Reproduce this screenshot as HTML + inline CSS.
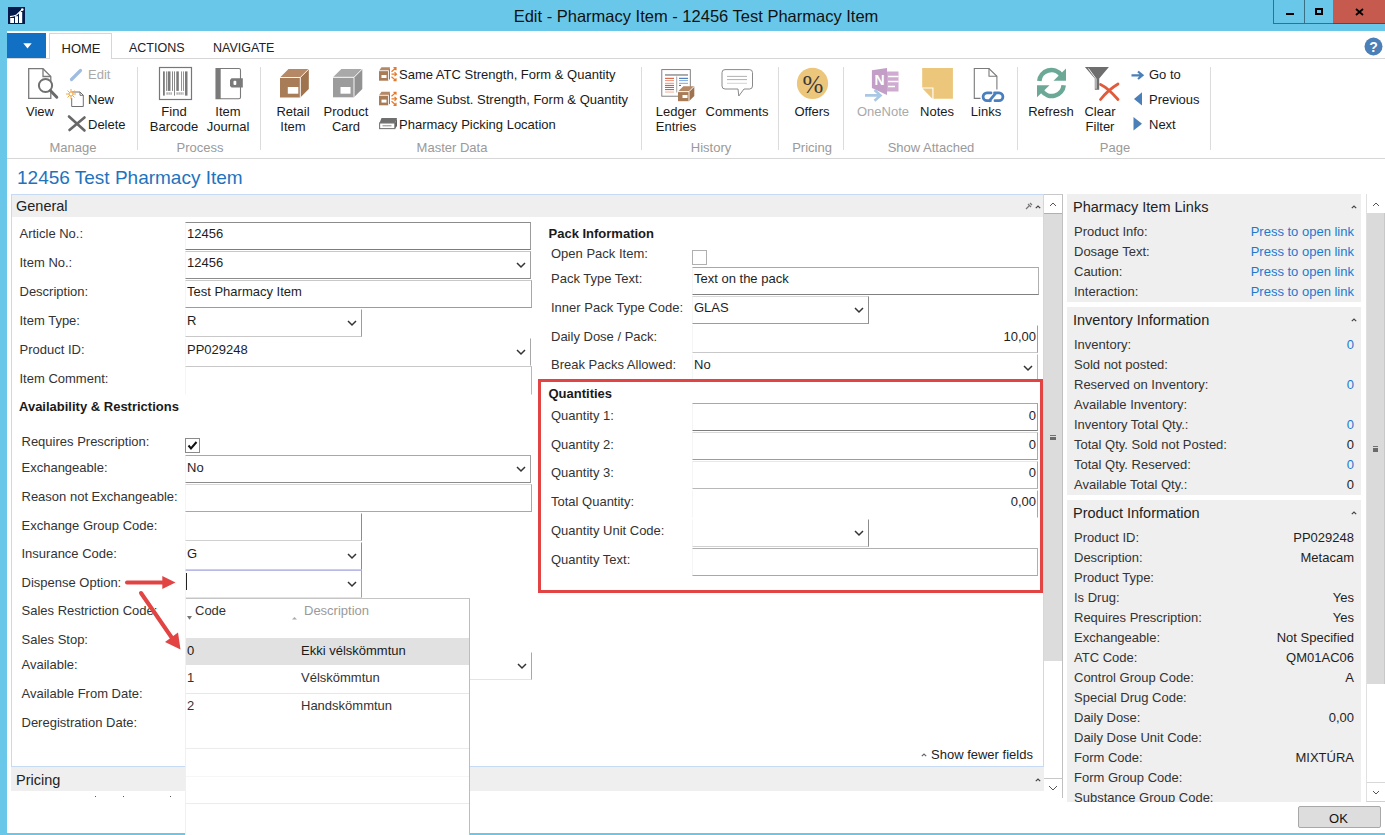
<!DOCTYPE html><html><head><meta charset="utf-8"><style>
html,body{margin:0;padding:0;}
body{width:1385px;height:835px;overflow:hidden;position:relative;background:#fff;font-family:"Liberation Sans",sans-serif;}
.a{position:absolute;}
.t{position:absolute;white-space:nowrap;}
</style></head><body>
<div class="a" style="left:0px;top:0px;width:1385px;height:31px;background:#69c8ea;"></div>
<div class="a" style="left:0px;top:0px;width:7px;height:835px;background:#69c8ea;"></div>
<div class="a" style="left:0px;top:833px;width:1385px;height:2px;background:#69c8ea;"></div>
<svg class="a" style="left:8px;top:7px;" width="17" height="17" viewBox="0 0 17 17"><rect width="17" height="17" fill="#021a4c"/><rect x="2.2" y="11" width="3.8" height="5" fill="#fff"/><rect x="7" y="9.2" width="3" height="6.8" fill="#fff"/><rect x="11" y="5" width="3.2" height="11" fill="#fff"/><path d="M2 9.6 Q6 9 8.5 8 L14.3 2.5" stroke="#fff" stroke-width="1.1" fill="none"/><circle cx="14.3" cy="2.6" r="1.3" fill="#fff"/></svg>
<div class="t" style="left:496px;width:400px;top:7.73px;font-size:16.5px;line-height:16.5px;color:#111;font-weight:normal;text-align:center;">Edit - Pharmacy Item - 12456 Test Pharmacy Item</div>
<div class="a" style="left:1273px;top:0px;width:31px;height:24px;background:#69c8ea;border:1px solid #3a6f86;border-top:none;border-right:none;box-sizing:border-box;"></div>
<div class="a" style="left:1304px;top:0px;width:30px;height:24px;background:#69c8ea;border:1px solid #3a6f86;border-top:none;box-sizing:border-box;"></div>
<div class="a" style="left:1333px;top:0px;width:52px;height:24px;background:#c75a4e;border-bottom:1px solid #7a3a33;box-sizing:border-box;"></div>
<div class="a" style="left:1286px;top:13px;width:8px;height:2px;background:#000;"></div>
<div class="a" style="left:1315px;top:8px;width:8px;height:7px;border:2px solid #000;box-sizing:border-box;"></div>
<svg class="a" style="left:1355px;top:8px;" width="9" height="8" viewBox="0 0 9 8"><path d="M1 1 L8 7 M8 1 L1 7" stroke="#000" stroke-width="1.8"/></svg>
<div class="a" style="left:7px;top:58px;width:1378px;height:1px;background:#d6d6d6;"></div>
<div class="a" style="left:7px;top:158px;width:1378px;height:1px;background:#d6d6d6;"></div>
<div class="a" style="left:7px;top:33px;width:39px;height:25px;background:#1170c4;"></div>
<svg class="a" style="left:22.5px;top:42.5px;" width="9" height="6" viewBox="0 0 9 6"><path d="M0.3 0.3 L8.7 0.3 L4.5 5.5 Z" fill="#fff"/></svg>
<div class="a" style="left:49px;top:33px;width:63px;height:26px;background:#fff;border:1px solid #d6d6d6;border-bottom:none;box-sizing:border-box;"></div>
<div class="t" style="left:61.5px;top:42.00px;font-size:13px;line-height:13px;color:#222;font-weight:normal;">HOME</div>
<div class="t" style="left:129px;top:42.42px;font-size:12.5px;line-height:12.5px;color:#222;font-weight:normal;">ACTIONS</div>
<div class="t" style="left:213px;top:42.42px;font-size:12.5px;line-height:12.5px;color:#222;font-weight:normal;">NAVIGATE</div>
<svg class="a" style="left:1364px;top:37px;" width="19" height="19" viewBox="0 0 19 19"><circle cx="9.5" cy="9.5" r="9" fill="#4a7fb8"/><text x="9.5" y="15" font-family="Liberation Sans" font-weight="bold" font-size="14" fill="#fff" text-anchor="middle">?</text></svg>
<div class="a" style="left:137px;top:67px;width:1px;height:83px;background:#dcdcdc;"></div>
<div class="a" style="left:260px;top:67px;width:1px;height:83px;background:#dcdcdc;"></div>
<div class="a" style="left:641px;top:67px;width:1px;height:83px;background:#dcdcdc;"></div>
<div class="a" style="left:778px;top:67px;width:1px;height:83px;background:#dcdcdc;"></div>
<div class="a" style="left:843px;top:67px;width:1px;height:83px;background:#dcdcdc;"></div>
<div class="a" style="left:1017px;top:67px;width:1px;height:83px;background:#dcdcdc;"></div>
<div class="a" style="left:1210px;top:67px;width:1px;height:83px;background:#dcdcdc;"></div>
<div class="t" style="left:-127px;width:400px;top:140.50px;font-size:13px;line-height:13px;color:#9a9a9a;font-weight:normal;text-align:center;">Manage</div>
<div class="t" style="left:0px;width:400px;top:140.50px;font-size:13px;line-height:13px;color:#9a9a9a;font-weight:normal;text-align:center;">Process</div>
<div class="t" style="left:252px;width:400px;top:140.50px;font-size:13px;line-height:13px;color:#9a9a9a;font-weight:normal;text-align:center;">Master Data</div>
<div class="t" style="left:511px;width:400px;top:140.50px;font-size:13px;line-height:13px;color:#9a9a9a;font-weight:normal;text-align:center;">History</div>
<div class="t" style="left:612px;width:400px;top:140.50px;font-size:13px;line-height:13px;color:#9a9a9a;font-weight:normal;text-align:center;">Pricing</div>
<div class="t" style="left:731px;width:400px;top:140.50px;font-size:13px;line-height:13px;color:#9a9a9a;font-weight:normal;text-align:center;">Show Attached</div>
<div class="t" style="left:915px;width:400px;top:140.50px;font-size:13px;line-height:13px;color:#9a9a9a;font-weight:normal;text-align:center;">Page</div>
<div class="t" style="left:-160px;width:400px;top:105.00px;font-size:13px;line-height:13px;color:#1a1a1a;font-weight:normal;text-align:center;">View</div>
<div class="t" style="left:-26px;width:400px;top:105.00px;font-size:13px;line-height:13px;color:#1a1a1a;font-weight:normal;text-align:center;">Find</div>
<div class="t" style="left:-26px;width:400px;top:119.50px;font-size:13px;line-height:13px;color:#1a1a1a;font-weight:normal;text-align:center;">Barcode</div>
<div class="t" style="left:28px;width:400px;top:105.00px;font-size:13px;line-height:13px;color:#1a1a1a;font-weight:normal;text-align:center;">Item</div>
<div class="t" style="left:28px;width:400px;top:119.50px;font-size:13px;line-height:13px;color:#1a1a1a;font-weight:normal;text-align:center;">Journal</div>
<div class="t" style="left:93px;width:400px;top:105.00px;font-size:13px;line-height:13px;color:#1a1a1a;font-weight:normal;text-align:center;">Retail</div>
<div class="t" style="left:93px;width:400px;top:119.50px;font-size:13px;line-height:13px;color:#1a1a1a;font-weight:normal;text-align:center;">Item</div>
<div class="t" style="left:146px;width:400px;top:105.00px;font-size:13px;line-height:13px;color:#1a1a1a;font-weight:normal;text-align:center;">Product</div>
<div class="t" style="left:146px;width:400px;top:119.50px;font-size:13px;line-height:13px;color:#1a1a1a;font-weight:normal;text-align:center;">Card</div>
<div class="t" style="left:476px;width:400px;top:105.00px;font-size:13px;line-height:13px;color:#1a1a1a;font-weight:normal;text-align:center;">Ledger</div>
<div class="t" style="left:476px;width:400px;top:119.50px;font-size:13px;line-height:13px;color:#1a1a1a;font-weight:normal;text-align:center;">Entries</div>
<div class="t" style="left:537px;width:400px;top:105.00px;font-size:13px;line-height:13px;color:#1a1a1a;font-weight:normal;text-align:center;">Comments</div>
<div class="t" style="left:612px;width:400px;top:105.00px;font-size:13px;line-height:13px;color:#1a1a1a;font-weight:normal;text-align:center;">Offers</div>
<div class="t" style="left:683px;width:400px;top:105.00px;font-size:13px;line-height:13px;color:#a9a9a9;font-weight:normal;text-align:center;">OneNote</div>
<div class="t" style="left:737px;width:400px;top:105.00px;font-size:13px;line-height:13px;color:#1a1a1a;font-weight:normal;text-align:center;">Notes</div>
<div class="t" style="left:786px;width:400px;top:105.00px;font-size:13px;line-height:13px;color:#1a1a1a;font-weight:normal;text-align:center;">Links</div>
<div class="t" style="left:851px;width:400px;top:105.00px;font-size:13px;line-height:13px;color:#1a1a1a;font-weight:normal;text-align:center;">Refresh</div>
<div class="t" style="left:900px;width:400px;top:105.00px;font-size:13px;line-height:13px;color:#1a1a1a;font-weight:normal;text-align:center;">Clear</div>
<div class="t" style="left:900px;width:400px;top:119.50px;font-size:13px;line-height:13px;color:#1a1a1a;font-weight:normal;text-align:center;">Filter</div>
<div class="t" style="left:88px;top:68.00px;font-size:13px;line-height:13px;color:#a9a9a9;font-weight:normal;">Edit</div>
<div class="t" style="left:88px;top:93.00px;font-size:13px;line-height:13px;color:#1a1a1a;font-weight:normal;">New</div>
<div class="t" style="left:88px;top:117.50px;font-size:13px;line-height:13px;color:#1a1a1a;font-weight:normal;">Delete</div>
<div class="t" style="left:399px;top:68.00px;font-size:13px;line-height:13px;color:#1a1a1a;font-weight:normal;">Same ATC Strength, Form &amp; Quantity</div>
<div class="t" style="left:399px;top:93.00px;font-size:13px;line-height:13px;color:#1a1a1a;font-weight:normal;">Same Subst. Strength, Form &amp; Quantity</div>
<div class="t" style="left:399px;top:117.50px;font-size:13px;line-height:13px;color:#1a1a1a;font-weight:normal;">Pharmacy Picking Location</div>
<div class="t" style="left:1149px;top:68.00px;font-size:13px;line-height:13px;color:#1a1a1a;font-weight:normal;">Go to</div>
<div class="t" style="left:1149px;top:93.00px;font-size:13px;line-height:13px;color:#1a1a1a;font-weight:normal;">Previous</div>
<div class="t" style="left:1149px;top:117.50px;font-size:13px;line-height:13px;color:#1a1a1a;font-weight:normal;">Next</div>
<svg class="a" style="left:0;top:0" width="1385" height="160" viewBox="0 0 1385 160"><path d="M28.7 68.7 H43 L50.8 76.5 V98.3 H28.7 Z" fill="#fff" stroke="#7a7a7a" stroke-width="1.3"/><path d="M43 68.7 V76.5 H50.8" fill="none" stroke="#7a7a7a" stroke-width="1.3"/><circle cx="45.5" cy="85.5" r="6.6" fill="#fff" stroke="#707070" stroke-width="2"/><path d="M50.3 90.5 L56.8 97.2" stroke="#6a6a6a" stroke-width="3" stroke-linecap="round"/><path d="M71.5 79.5 L80.5 70.5" stroke="#9fbde2" stroke-width="3.2" stroke-linecap="round"/><path d="M71.7 92 H80 L83.3 95.3 V106.5 H71.7 V98" fill="#fff" stroke="#707070" stroke-width="1"/><path d="M80 92 V95.3 H83.3" fill="none" stroke="#707070" stroke-width="1"/><path d="M71 89 V99 M66 94 H76 M67.5 90.5 L74.5 97.5 M74.5 90.5 L67.5 97.5" stroke="#eda94a" stroke-width="1"/><circle cx="71" cy="94" r="2" fill="#fff" stroke="#eda94a" stroke-width="1"/><path d="M69 116.5 L84.5 130.5 M84.5 117.5 L69.5 130" stroke="#686868" stroke-width="2.6" stroke-linecap="round"/><rect x="159.5" y="67.5" width="32" height="32" fill="#fff" stroke="#777" stroke-width="1.2"/><rect x="163" y="71.4" width="1.8" height="24.2" fill="#7a7a7a"/><rect x="166.2" y="71.4" width="1.1" height="19.5" fill="#7a7a7a"/><rect x="168" y="71.4" width="2.5" height="19.5" fill="#7a7a7a"/><rect x="172" y="71.4" width="0.9" height="19.5" fill="#7a7a7a"/><rect x="174.1" y="71.4" width="0.9" height="24.2" fill="#7a7a7a"/><rect x="176.3" y="71.4" width="2.5" height="19.5" fill="#7a7a7a"/><rect x="181" y="71.4" width="0.8" height="19.5" fill="#7a7a7a"/><rect x="183.2" y="71.4" width="0.8" height="19.5" fill="#7a7a7a"/><rect x="185" y="71.4" width="2.5" height="24.2" fill="#7a7a7a"/><path d="M166.5 93.5 h6 M176.5 93.5 h7" stroke="#999" stroke-width="2.5" stroke-dasharray="1.2 0.8"/><path d="M216 68.5 H239 Q240.5 68.5 240.5 70 V97.3 Q240.5 98.8 239 98.8 H216 Z" fill="#fff" stroke="#7a7a7a" stroke-width="1.1"/><rect x="216" y="68" width="4.7" height="31" fill="#7a7a7a"/><path d="M231.5 78.2 H242.8 V87.6 H231.5 L230 86 V80 Z" fill="#7a7a7a"/><rect x="233.5" y="80.8" width="2.8" height="4.2" rx="1" fill="#fff"/><path d="M280 77.5 L288.5 69 H308.8 L300.3 77.5 Z" fill="#b58966"/><path d="M300.3 77.5 L308.8 69 V89 L300.3 97.5 Z" fill="#a0734f"/><rect x="280" y="77.5" width="20.3" height="20" fill="#a97c58"/><path d="M280 77.5 H300.3 L308.8 69 M300.3 77.5 V97.5" fill="none" stroke="#fff" stroke-width="0.9"/><rect x="287.8" y="87" width="10.5" height="6.7" fill="#fff"/><path d="M333 77.3 L341.3 69 H362.3 L354 77.3 Z" fill="#a9a9a9"/><path d="M354 77.3 L362.3 69 V89 L354 97.3 Z" fill="#929292"/><rect x="333" y="77.3" width="21" height="20" fill="#9c9c9c"/><path d="M333 77.3 H354 L362.3 69 M354 77.3 V97.3" fill="none" stroke="#fff" stroke-width="0.9"/><rect x="340.5" y="87" width="10" height="6.7" fill="#fff"/><path d="M379 70.7 L381.5 67.2 H390 L388.5 70.7 Z" fill="#b58966"/><rect x="379" y="70.7" width="9.5" height="10" fill="#a97c58"/><path d="M388.5 70.7 L390 67.2 V78.7 L388.5 80.7 Z" fill="#a0734f"/><path d="M379 70.7 H388.5 V80.7" fill="none" stroke="#fff" stroke-width="0.8"/><rect x="381.5" y="75.0" width="5" height="3" fill="#fff"/><path d="M391.5 71.7 L396 67.7 M393.5 67.7 H396 V70.2 M391.5 74.2 H396.5 M394.5 72.2 L396.5 74.2 L394.5 76.2 M391.5 76.7 L396 80.7 M393.5 80.7 H396 V78.2" fill="none" stroke="#e8782a" stroke-width="1.2"/><path d="M379 95.3 L381.5 91.8 H390 L388.5 95.3 Z" fill="#b58966"/><rect x="379" y="95.3" width="9.5" height="10" fill="#a97c58"/><path d="M388.5 95.3 L390 91.8 V103.3 L388.5 105.3 Z" fill="#a0734f"/><path d="M379 95.3 H388.5 V105.3" fill="none" stroke="#fff" stroke-width="0.8"/><rect x="381.5" y="99.6" width="5" height="3" fill="#fff"/><path d="M391.5 96.3 L396 92.3 M393.5 92.3 H396 V94.8 M391.5 98.8 H396.5 M394.5 96.8 L396.5 98.8 L394.5 100.8 M391.5 101.3 L396 105.3 M393.5 105.3 H396 V102.8" fill="none" stroke="#e8782a" stroke-width="1.2"/><path d="M381.5 118 H397 L395 123 H379.5 Z" fill="#6f6f6f"/><path d="M395 123 L397 118 V126 L395 128.8 Z" fill="#5f5f5f"/><rect x="379.6" y="123" width="15.2" height="5.6" fill="#fff" stroke="#777" stroke-width="1.1"/><path d="M382.5 125.8 H391.5" stroke="#888" stroke-width="1"/><rect x="661.8" y="69.6" width="28.5" height="26.6" fill="#fff" stroke="#747474" stroke-width="0.9"/><rect x="665" y="74" width="23" height="1.9" fill="#a8a8a8"/><rect x="676.3" y="76.5" width="0.9" height="16" fill="#999"/><rect x="665" y="77.8" width="9" height="1.1" fill="#db5a3c"/><rect x="665" y="80.0" width="9" height="1.1" fill="#e9a08a"/><rect x="665" y="82.8" width="9" height="1.1" fill="#e9a08a"/><rect x="665" y="84.9" width="9" height="1.1" fill="#db5a3c"/><rect x="665" y="86.9" width="9" height="1.1" fill="#db5a3c"/><rect x="665" y="89.0" width="9" height="1.1" fill="#db5a3c"/><rect x="665" y="91.5" width="9" height="1.1" fill="#f0b8a8"/><rect x="679" y="77.8" width="9" height="1.1" fill="#3f77bb"/><rect x="679" y="80.0" width="9" height="1.1" fill="#8fb0d8"/><rect x="679" y="82.8" width="9" height="1.1" fill="#8fb0d8"/><rect x="679" y="84.9" width="2" height="1.1" fill="#3f77bb"/><path d="M678 91.6 L683.3 86.3 H694.3 L689 91.6 Z" fill="#b58966"/><path d="M689 91.6 L694.3 86.3 V95.89999999999999 L689 101.19999999999999 Z" fill="#a0734f"/><rect x="678" y="91.6" width="11" height="9.6" fill="#a97c58"/><path d="M678 91.6 H689 L694.3 86.3 M689 91.6 V101.19999999999999" fill="none" stroke="#fff" stroke-width="0.9"/><rect x="682.5" y="95" width="5" height="3" fill="#fff"/><path d="M725 69.6 H749.5 Q752.5 69.6 752.5 72.6 V86 Q752.5 89 749.5 89 H744 L738.8 96 L738 89 H725 Q722 89 722 86 V72.6 Q722 69.6 725 69.6 Z" fill="#fff" stroke="#8a8a8a" stroke-width="1"/><path d="M727 76.4 H747 M727 79.6 H747" stroke="#a8a8a8" stroke-width="0.9"/><path d="M727 83.3 H747" stroke="#cfcfcf" stroke-width="0.9"/><circle cx="812.5" cy="83.4" r="15.6" fill="#ecc67a"/><text x="813" y="93" font-family="Liberation Serif" font-size="25" fill="#3a3a3a" text-anchor="middle">%</text><path d="M871.9 70.2 L887 68 V95 L871.9 88 Z" fill="#c39ec6"/><rect x="887" y="71.5" width="11.5" height="20" fill="#cfaad1"/><path d="M888 76.5 H895 M888 81.5 H895 M888 86.5 H895 M895 76.5 H898.5 M895 81.5 H898.5" stroke="#fff" stroke-width="1.4"/><text x="879.5" y="85" font-family="Liberation Sans" font-weight="bold" font-size="14" fill="#fff" text-anchor="middle">N</text><path d="M865 95.4 H879 M874.5 90 L880.5 95.4 L874.5 100.8" fill="none" stroke="#a9c8e4" stroke-width="2.6"/><path d="M922.2 68 H952.9 V98.7 H933.5 V87.4 H922.2 Z" fill="#ecc67a"/><path d="M922.5 88.6 H932.4 V98.7 Z" fill="#ecc67a"/><path d="M974.3 89 V98.4 H980.5 M996.9 89.4 V76.3 L989 68.5 H974.3 V89" fill="#fff" stroke="#7a7a7a" stroke-width="1.1"/><path d="M989 68.5 V76.3 H996.9" fill="none" stroke="#7a7a7a" stroke-width="1.1"/><path d="M991 92.9 H987 A3.9 3.9 0 0 0 987 100.7 H990.5 M994.5 92.9 H999 A3.9 3.9 0 0 1 999 100.7 H995 M989.5 100.7 L996 92.9" fill="none" stroke="#4a7fbf" stroke-width="2.8" stroke-linecap="round"/><path d="M1039.3 81 A12 12 0 0 1 1061 75" fill="none" stroke="#6ba896" stroke-width="4.6"/><path d="M1066 68.5 V80.8 H1053.5 Z" fill="#6ba896"/><path d="M1063.7 85.2 A12 12 0 0 1 1042 91" fill="none" stroke="#6ba896" stroke-width="4.6"/><path d="M1037 97.3 V85.3 H1049.5 Z" fill="#6ba896"/><path d="M1084.9 67.1 H1108.9 L1099.2 78.5 V89.8 H1094.8 V78.5 Z" fill="#6e6e6e"/><path d="M1088.5 68.5 L1096 78.8 V88.8" fill="none" stroke="#fff" stroke-width="0.9"/><path d="M1100.5 84.5 Q1108 88 1118 99.5 M1118 84 Q1108 90 1100.5 99.5" fill="none" stroke="#e05a3c" stroke-width="2.8" stroke-linecap="round"/><path d="M1131.5 75.3 H1142 M1138 71.5 L1142.5 75.3 L1138 79" fill="none" stroke="#4a7fb8" stroke-width="2.2"/><path d="M1142 92.3 V105.5 L1134 98.9 Z" fill="#4a7fb8"/><path d="M1133.5 117 V130.5 L1142 123.7 Z" fill="#4a7fb8"/></svg>
<div class="t" style="left:17px;top:167.92px;font-size:19px;line-height:19px;color:#1e73be;font-weight:normal;">12456 Test Pharmacy Item</div>
<div class="a" style="left:11px;top:194px;width:1033px;height:573px;border:1px solid #c6daf4;box-sizing:border-box;background:#fff;"></div>
<div class="a" style="left:12px;top:195px;width:1031px;height:22px;background:#efefef;"></div>
<div class="t" style="left:16px;top:199.43px;font-size:14.5px;line-height:14.5px;color:#222;font-weight:normal;">General</div>
<svg class="a" style="left:1024px;top:201px;" width="10" height="10" viewBox="0 0 10 10"><path d="M2 8 L5 5 M4 3 L7 6 M6 2 L8 4" stroke="#777" stroke-width="1.2"/></svg>
<svg class="a" style="left:1034.5px;top:204.5px;" width="6" height="4" viewBox="0 0 6 4"><path d="M0.8 3.2 L3 1 L5.2 3.2" fill="none" stroke="#444" stroke-width="1.2"/></svg>
<div class="a" style="left:11px;top:767px;width:1033px;height:24px;background:#efefef;"></div>
<div class="a" style="left:95px;top:796px;width:1px;height:1px;background:#555;"></div>
<div class="a" style="left:123px;top:796px;width:1px;height:1px;background:#555;"></div>
<div class="a" style="left:170px;top:796px;width:1px;height:1px;background:#555;"></div>
<div class="t" style="left:16px;top:772.73px;font-size:14.5px;line-height:14.5px;color:#222;font-weight:normal;">Pricing</div>
<svg class="a" style="left:1034.5px;top:777.5px;" width="6" height="4" viewBox="0 0 6 4"><path d="M0.8 3.2 L3 1 L5.2 3.2" fill="none" stroke="#444" stroke-width="1.2"/></svg>
<div class="a" style="left:1044px;top:194px;width:19px;height:604px;background:#fff;border-top:1px solid #c8c8c8;border-right:1px solid #c0c0c0;box-sizing:border-box;"></div>
<div class="a" style="left:1044px;top:213px;width:18px;height:1px;background:#b0b0b0;"></div>
<div class="a" style="left:1044px;top:214px;width:18px;height:447px;background:#dcdcdc;"></div>
<div class="a" style="left:1044px;top:778px;width:18px;height:1px;background:#c8c8c8;"></div>
<svg class="a" style="left:1049px;top:201.5px;" width="8" height="5" viewBox="0 0 8 5"><path d="M1 4 L4 1 L7 4" fill="none" stroke="#555" stroke-width="1"/></svg>
<svg class="a" style="left:1048px;top:785px;" width="10" height="6" viewBox="0 0 10 6"><path d="M1 1 L5 5 L9 1" fill="none" stroke="#555" stroke-width="1"/></svg>
<div class="a" style="left:1050px;top:435px;width:6px;height:1px;background:#707070;"></div>
<div class="a" style="left:1050px;top:437px;width:6px;height:3px;background:#6a6a6a;"></div>
<div class="t" style="left:19.5px;top:227.30px;font-size:13px;line-height:13px;color:#333333;font-weight:normal;">Article No.:</div>
<div class="t" style="left:19.5px;top:256.20px;font-size:13px;line-height:13px;color:#333333;font-weight:normal;">Item No.:</div>
<div class="t" style="left:19.5px;top:285.00px;font-size:13px;line-height:13px;color:#333333;font-weight:normal;">Description:</div>
<div class="t" style="left:19.5px;top:314.00px;font-size:13px;line-height:13px;color:#333333;font-weight:normal;">Item Type:</div>
<div class="t" style="left:19.5px;top:342.80px;font-size:13px;line-height:13px;color:#333333;font-weight:normal;">Product ID:</div>
<div class="t" style="left:19.5px;top:372.00px;font-size:13px;line-height:13px;color:#333333;font-weight:normal;">Item Comment:</div>
<div class="t" style="left:19px;top:400.20px;font-size:13px;line-height:13px;color:#1a1a1a;font-weight:bold;">Availability &amp; Restrictions</div>
<div class="t" style="left:21.5px;top:435.00px;font-size:13px;line-height:13px;color:#333333;font-weight:normal;">Requires Prescription:</div>
<div class="t" style="left:21.5px;top:460.50px;font-size:13px;line-height:13px;color:#333333;font-weight:normal;">Exchangeable:</div>
<div class="t" style="left:21.5px;top:489.50px;font-size:13px;line-height:13px;color:#333333;font-weight:normal;">Reason not Exchangeable:</div>
<div class="t" style="left:21.5px;top:518.50px;font-size:13px;line-height:13px;color:#333333;font-weight:normal;">Exchange Group Code:</div>
<div class="t" style="left:21.5px;top:547.00px;font-size:13px;line-height:13px;color:#333333;font-weight:normal;">Insurance Code:</div>
<div class="t" style="left:21.5px;top:575.70px;font-size:13px;line-height:13px;color:#333333;font-weight:normal;">Dispense Option:</div>
<div class="t" style="left:21.5px;top:604.40px;font-size:13px;line-height:13px;color:#333333;font-weight:normal;">Sales Restriction Code:</div>
<div class="t" style="left:21.5px;top:633.00px;font-size:13px;line-height:13px;color:#333333;font-weight:normal;">Sales Stop:</div>
<div class="t" style="left:21.5px;top:658.20px;font-size:13px;line-height:13px;color:#333333;font-weight:normal;">Available:</div>
<div class="t" style="left:21.5px;top:687.00px;font-size:13px;line-height:13px;color:#333333;font-weight:normal;">Available From Date:</div>
<div class="t" style="left:21.5px;top:715.70px;font-size:13px;line-height:13px;color:#333333;font-weight:normal;">Deregistration Date:</div>
<div class="a" style="left:185px;top:222px;width:346px;height:28px;background:#fff;border-top:1px solid #8c8c8c;border-right:1px solid #9c9c9c;border-bottom:1px solid #7c7c7c;border-left:1px solid #f5f5f5;box-sizing:border-box;"></div>
<div class="t" style="left:187px;top:227.30px;font-size:13px;line-height:13px;color:#1e1e1e;font-weight:normal;">12456</div>
<div class="a" style="left:185px;top:251px;width:346px;height:28px;background:#fff;border-top:1px solid #c8c8c8;border-right:1px solid #a0a0a0;border-bottom:1px solid #8c8c8c;border-left:1px solid #f5f5f5;box-sizing:border-box;"></div>
<div class="t" style="left:187px;top:256.20px;font-size:13px;line-height:13px;color:#1e1e1e;font-weight:normal;">12456</div>
<svg class="a" style="left:516px;top:262px;" width="10" height="7" viewBox="0 0 10 7"><path d="M1 1 L5 5 L9 1" fill="none" stroke="#333" stroke-width="1.5"/></svg>
<div class="a" style="left:185px;top:280px;width:347px;height:28px;background:#fff;border-top:1px solid #c8c8c8;border-right:1px solid #a8a8a8;border-bottom:1px solid #9c9c9c;border-left:1px solid #f5f5f5;box-sizing:border-box;"></div>
<div class="t" style="left:187px;top:285.00px;font-size:13px;line-height:13px;color:#1e1e1e;font-weight:normal;">Test Pharmacy Item</div>
<div class="a" style="left:185px;top:309px;width:177px;height:28px;background:#fff;border-top:1px solid #fff;border-right:1px solid #9c9c9c;border-bottom:1px solid #c8c8c8;border-left:1px solid #f5f5f5;box-sizing:border-box;"></div>
<div class="t" style="left:187px;top:314.00px;font-size:13px;line-height:13px;color:#1e1e1e;font-weight:normal;">R</div>
<svg class="a" style="left:347px;top:320px;" width="10" height="7" viewBox="0 0 10 7"><path d="M1 1 L5 5 L9 1" fill="none" stroke="#333" stroke-width="1.5"/></svg>
<div class="a" style="left:185px;top:338px;width:346px;height:28px;background:#fff;border-top:1px solid #fff;border-right:1px solid #a8a8a8;border-bottom:1px solid #fff;border-left:1px solid #f5f5f5;box-sizing:border-box;"></div>
<div class="t" style="left:187px;top:342.80px;font-size:13px;line-height:13px;color:#1e1e1e;font-weight:normal;">PP029248</div>
<svg class="a" style="left:516px;top:349px;" width="10" height="7" viewBox="0 0 10 7"><path d="M1 1 L5 5 L9 1" fill="none" stroke="#333" stroke-width="1.5"/></svg>
<div class="a" style="left:185px;top:366px;width:347px;height:29px;background:#fff;border-top:1px solid #c8c8c8;border-right:1px solid #b8b8b8;border-bottom:1px solid #fff;border-left:1px solid #f5f5f5;box-sizing:border-box;"></div>
<div class="a" style="left:185px;top:438px;width:15px;height:15px;border:1px solid #8a8a8a;box-sizing:border-box;background:#fff;"></div>
<svg class="a" style="left:186px;top:439px;" width="13" height="13" viewBox="0 0 13 13"><path d="M2.5 6.5 L5 9.5 L10.5 3" fill="none" stroke="#111" stroke-width="2"/></svg>
<div class="a" style="left:185px;top:455px;width:346px;height:28px;background:#fff;border-top:1px solid #a8a8a8;border-right:1px solid #a0a0a0;border-bottom:1px solid #8c8c8c;border-left:1px solid #f5f5f5;box-sizing:border-box;"></div>
<div class="t" style="left:187px;top:460.50px;font-size:13px;line-height:13px;color:#1e1e1e;font-weight:normal;">No</div>
<svg class="a" style="left:516px;top:466px;" width="10" height="7" viewBox="0 0 10 7"><path d="M1 1 L5 5 L9 1" fill="none" stroke="#333" stroke-width="1.5"/></svg>
<div class="a" style="left:185px;top:484px;width:347px;height:28px;background:#fff;border-top:1px solid #d8d8d8;border-right:1px solid #a8a8a8;border-bottom:1px solid #a8a8a8;border-left:1px solid #f5f5f5;box-sizing:border-box;"></div>
<div class="a" style="left:185px;top:513px;width:177px;height:28px;background:#fff;border-top:1px solid #fff;border-right:1px solid #8c8c8c;border-bottom:1px solid #d0d0d0;border-left:1px solid #f5f5f5;box-sizing:border-box;"></div>
<div class="a" style="left:185px;top:542px;width:177px;height:28px;background:#fff;border-top:1px solid #fff;border-right:1px solid #8c8c8c;border-bottom:1px solid #d0d0d0;border-left:1px solid #f5f5f5;box-sizing:border-box;"></div>
<div class="t" style="left:187px;top:547.00px;font-size:13px;line-height:13px;color:#1e1e1e;font-weight:normal;">G</div>
<svg class="a" style="left:347px;top:553px;" width="10" height="7" viewBox="0 0 10 7"><path d="M1 1 L5 5 L9 1" fill="none" stroke="#333" stroke-width="1.5"/></svg>
<div class="a" style="left:185px;top:570px;width:177px;height:28px;background:#fff;border-top:1px solid #b9b9e6;border-right:1px solid #9b9bd8;border-bottom:1px solid #e4e4e4;border-left:1px solid #f5f5f5;box-sizing:border-box;"></div>
<svg class="a" style="left:347px;top:581px;" width="10" height="7" viewBox="0 0 10 7"><path d="M1 1 L5 5 L9 1" fill="none" stroke="#333" stroke-width="1.5"/></svg>
<div class="a" style="left:186px;top:573px;width:1px;height:17px;background:#222;"></div>
<div class="a" style="left:185px;top:652px;width:347px;height:28px;background:#fff;border-top:1px solid #fff;border-right:1px solid #a8a8a8;border-bottom:1px solid #e4e4e4;border-left:1px solid #f5f5f5;box-sizing:border-box;"></div>
<svg class="a" style="left:517px;top:663px;" width="10" height="7" viewBox="0 0 10 7"><path d="M1 1 L5 5 L9 1" fill="none" stroke="#333" stroke-width="1.5"/></svg>
<div class="t" style="left:548.5px;top:226.80px;font-size:13px;line-height:13px;color:#1a1a1a;font-weight:bold;">Pack Information</div>
<div class="t" style="left:551px;top:246.80px;font-size:13px;line-height:13px;color:#333333;font-weight:normal;">Open Pack Item:</div>
<div class="t" style="left:551px;top:271.90px;font-size:13px;line-height:13px;color:#333333;font-weight:normal;">Pack Type Text:</div>
<div class="t" style="left:551px;top:300.60px;font-size:13px;line-height:13px;color:#333333;font-weight:normal;">Inner Pack Type Code:</div>
<div class="t" style="left:551px;top:329.80px;font-size:13px;line-height:13px;color:#333333;font-weight:normal;">Daily Dose / Pack:</div>
<div class="t" style="left:551px;top:358.10px;font-size:13px;line-height:13px;color:#333333;font-weight:normal;">Break Packs Allowed:</div>
<div class="a" style="left:692px;top:250px;width:15px;height:15px;border:1px solid #b0b0b0;box-sizing:border-box;background:#fff;"></div>
<div class="a" style="left:692px;top:267px;width:347px;height:28px;background:#fff;border-top:1px solid #a8a8a8;border-right:1px solid #b0b0b0;border-bottom:1px solid #808080;border-left:1px solid #f5f5f5;box-sizing:border-box;"></div>
<div class="t" style="left:694px;top:271.90px;font-size:13px;line-height:13px;color:#1e1e1e;font-weight:normal;">Text on the pack</div>
<div class="a" style="left:692px;top:296px;width:177px;height:28px;background:#fff;border-top:1px solid #d8d8d8;border-right:1px solid #8c8c8c;border-bottom:1px solid #9c9c9c;border-left:1px solid #f5f5f5;box-sizing:border-box;"></div>
<div class="t" style="left:694px;top:300.60px;font-size:13px;line-height:13px;color:#1e1e1e;font-weight:normal;">GLAS</div>
<svg class="a" style="left:854px;top:307px;" width="10" height="7" viewBox="0 0 10 7"><path d="M1 1 L5 5 L9 1" fill="none" stroke="#333" stroke-width="1.5"/></svg>
<div class="a" style="left:692px;top:325px;width:346px;height:28px;background:#fff;border-top:1px solid #fff;border-right:1px solid #a0a0a0;border-bottom:1px solid #c8c8c8;border-left:1px solid #f5f5f5;box-sizing:border-box;"></div>
<div class="t" style="right:349px;top:329.80px;font-size:13px;line-height:13px;color:#1e1e1e;font-weight:normal;text-align:right;">10,00</div>
<div class="a" style="left:692px;top:354px;width:346px;height:28px;background:#fff;border-top:1px solid #fff;border-right:1px solid #b8b8b8;border-bottom:1px solid #fff;border-left:1px solid #f5f5f5;box-sizing:border-box;"></div>
<div class="t" style="left:694px;top:358.10px;font-size:13px;line-height:13px;color:#1e1e1e;font-weight:normal;">No</div>
<svg class="a" style="left:1023px;top:365px;" width="10" height="7" viewBox="0 0 10 7"><path d="M1 1 L5 5 L9 1" fill="none" stroke="#333" stroke-width="1.5"/></svg>
<div class="a" style="left:538px;top:379px;width:505px;height:214px;border:3px solid #e24444;box-sizing:border-box;"></div>
<div class="t" style="left:548.5px;top:386.50px;font-size:13px;line-height:13px;color:#1a1a1a;font-weight:bold;">Quantities</div>
<div class="t" style="left:551px;top:408.60px;font-size:13px;line-height:13px;color:#333333;font-weight:normal;">Quantity 1:</div>
<div class="t" style="left:551px;top:437.50px;font-size:13px;line-height:13px;color:#333333;font-weight:normal;">Quantity 2:</div>
<div class="t" style="left:551px;top:466.40px;font-size:13px;line-height:13px;color:#333333;font-weight:normal;">Quantity 3:</div>
<div class="t" style="left:551px;top:495.40px;font-size:13px;line-height:13px;color:#333333;font-weight:normal;">Total Quantity:</div>
<div class="t" style="left:551px;top:523.70px;font-size:13px;line-height:13px;color:#333333;font-weight:normal;">Quantity Unit Code:</div>
<div class="t" style="left:551px;top:552.70px;font-size:13px;line-height:13px;color:#333333;font-weight:normal;">Quantity Text:</div>
<div class="a" style="left:692px;top:403px;width:346px;height:28px;background:#fff;border-top:1px solid #a8a8a8;border-right:1px solid #a0a0a0;border-bottom:1px solid #7c7c7c;border-left:1px solid #f5f5f5;box-sizing:border-box;"></div>
<div class="t" style="right:349px;top:408.60px;font-size:13px;line-height:13px;color:#1e1e1e;font-weight:normal;text-align:right;">0</div>
<div class="a" style="left:692px;top:432px;width:346px;height:28px;background:#fff;border-top:1px solid #d8d8d8;border-right:1px solid #a8a8a8;border-bottom:1px solid #9c9c9c;border-left:1px solid #f5f5f5;box-sizing:border-box;"></div>
<div class="t" style="right:349px;top:437.50px;font-size:13px;line-height:13px;color:#1e1e1e;font-weight:normal;text-align:right;">0</div>
<div class="a" style="left:692px;top:461px;width:346px;height:28px;background:#fff;border-top:1px solid #e8e8e8;border-right:1px solid #a8a8a8;border-bottom:1px solid #b8b8b8;border-left:1px solid #f5f5f5;box-sizing:border-box;"></div>
<div class="t" style="right:349px;top:466.40px;font-size:13px;line-height:13px;color:#1e1e1e;font-weight:normal;text-align:right;">0</div>
<div class="a" style="left:692px;top:490px;width:346px;height:28px;background:#fff;border-top:1px solid #fff;border-right:1px solid #a8a8a8;border-bottom:1px solid #fff;border-left:1px solid #f5f5f5;box-sizing:border-box;"></div>
<div class="t" style="right:349px;top:495.40px;font-size:13px;line-height:13px;color:#1e1e1e;font-weight:normal;text-align:right;">0,00</div>
<div class="a" style="left:692px;top:519px;width:177px;height:28px;background:#fff;border-top:1px solid #fff;border-right:1px solid #8c8c8c;border-bottom:1px solid #d0d0d0;border-left:1px solid #f5f5f5;box-sizing:border-box;"></div>
<svg class="a" style="left:854px;top:530px;" width="10" height="7" viewBox="0 0 10 7"><path d="M1 1 L5 5 L9 1" fill="none" stroke="#333" stroke-width="1.5"/></svg>
<div class="a" style="left:692px;top:548px;width:346px;height:28px;background:#fff;border-top:1px solid #b0b0b0;border-right:1px solid #b0b0b0;border-bottom:1px solid #a8a8a8;border-left:1px solid #f5f5f5;box-sizing:border-box;"></div>
<svg class="a" style="left:921px;top:752.5px;" width="6" height="4" viewBox="0 0 6 4"><path d="M0.8 3.2 L3 1 L5.2 3.2" fill="none" stroke="#666" stroke-width="1.2"/></svg>
<div class="t" style="left:931px;top:748.00px;font-size:13px;line-height:13px;color:#222;font-weight:normal;">Show fewer fields</div>
<div class="a" style="left:185px;top:598px;width:285px;height:237px;background:#fff;border-top:1px solid #c4c4c4;border-right:1px solid #bdbdbd;box-sizing:border-box;"></div>
<div class="t" style="left:195px;top:603.80px;font-size:13px;line-height:13px;color:#333;font-weight:normal;">Code</div>
<div class="t" style="left:304px;top:603.80px;font-size:13px;line-height:13px;color:#9a9a9a;font-weight:normal;">Description</div>
<svg class="a" style="left:186.5px;top:616px;" width="5" height="4" viewBox="0 0 5 4"><path d="M0 0 H5 L2.5 3.8 Z" fill="#777"/></svg>
<svg class="a" style="left:291.5px;top:617px;" width="5" height="3" viewBox="0 0 5 3"><path d="M0 2.5 H5 L2.5 0 Z" fill="#aaa"/></svg>
<div class="a" style="left:185px;top:638px;width:284px;height:27px;background:#e1e1e1;"></div>
<div class="t" style="left:187px;top:643.80px;font-size:13px;line-height:13px;color:#1a1a1a;font-weight:normal;">0</div>
<div class="t" style="left:301px;top:643.80px;font-size:13px;line-height:13px;color:#1a1a1a;font-weight:normal;">Ekki vélskömmtun</div>
<div class="t" style="left:187px;top:671.00px;font-size:13px;line-height:13px;color:#333;font-weight:normal;">1</div>
<div class="t" style="left:301px;top:671.00px;font-size:13px;line-height:13px;color:#333;font-weight:normal;">Vélskömmtun</div>
<div class="t" style="left:187px;top:698.60px;font-size:13px;line-height:13px;color:#333;font-weight:normal;">2</div>
<div class="t" style="left:301px;top:698.60px;font-size:13px;line-height:13px;color:#333;font-weight:normal;">Handskömmtun</div>
<div class="a" style="left:185px;top:693px;width:284px;height:1px;background:#e8e8e8;"></div>
<div class="a" style="left:185px;top:748px;width:284px;height:1px;background:#ececec;"></div>
<div class="a" style="left:185px;top:776px;width:284px;height:1px;background:#f6f6f6;"></div>
<div class="a" style="left:185px;top:803px;width:284px;height:1px;background:#ececec;"></div>
<div class="a" style="left:185px;top:598px;width:1px;height:237px;background:#f0f0f0;"></div>
<svg class="a" style="left:120px;top:570px;" width="70" height="90" viewBox="0 0 70 90"><path d="M7 12.4 H45" stroke="#e24444" stroke-width="4" stroke-linecap="round"/><path d="M42.3 6 L55.5 12.4 L42.3 19 Z" fill="#e24444"/><path d="M21 23 L52 68" stroke="#e24444" stroke-width="4" stroke-linecap="round"/><path d="M45 72 L60.5 79.5 L58 62.5 Z" fill="#e24444"/></svg>
<div class="a" style="left:1067px;top:194px;width:294px;height:108px;background:#efefef;"></div>
<div class="a" style="left:1067px;top:307px;width:294px;height:188px;background:#efefef;"></div>
<div class="a" style="left:1067px;top:500px;width:294px;height:302px;background:#efefef;"></div>
<div class="t" style="left:1073px;top:200.03px;font-size:14.5px;line-height:14.5px;color:#222;font-weight:normal;">Pharmacy Item Links</div>
<div class="t" style="left:1073px;top:312.73px;font-size:14.5px;line-height:14.5px;color:#222;font-weight:normal;">Inventory Information</div>
<div class="t" style="left:1073px;top:505.73px;font-size:14.5px;line-height:14.5px;color:#222;font-weight:normal;">Product Information</div>
<svg class="a" style="left:1351px;top:204.5px;" width="6" height="4" viewBox="0 0 6 4"><path d="M0.8 3.2 L3 1 L5.2 3.2" fill="none" stroke="#444" stroke-width="1.2"/></svg>
<svg class="a" style="left:1351px;top:317.5px;" width="6" height="4" viewBox="0 0 6 4"><path d="M0.8 3.2 L3 1 L5.2 3.2" fill="none" stroke="#444" stroke-width="1.2"/></svg>
<svg class="a" style="left:1351px;top:510.5px;" width="6" height="4" viewBox="0 0 6 4"><path d="M0.8 3.2 L3 1 L5.2 3.2" fill="none" stroke="#444" stroke-width="1.2"/></svg>
<div class="t" style="left:1074px;top:224.80px;font-size:13px;line-height:13px;color:#333333;font-weight:normal;">Product Info:</div>
<div class="t" style="right:31px;top:224.80px;font-size:13px;line-height:13px;color:#1f78cf;font-weight:normal;text-align:right;">Press to open link</div>
<div class="t" style="left:1074px;top:244.80px;font-size:13px;line-height:13px;color:#333333;font-weight:normal;">Dosage Text:</div>
<div class="t" style="right:31px;top:244.80px;font-size:13px;line-height:13px;color:#1f78cf;font-weight:normal;text-align:right;">Press to open link</div>
<div class="t" style="left:1074px;top:264.80px;font-size:13px;line-height:13px;color:#333333;font-weight:normal;">Caution:</div>
<div class="t" style="right:31px;top:264.80px;font-size:13px;line-height:13px;color:#1f78cf;font-weight:normal;text-align:right;">Press to open link</div>
<div class="t" style="left:1074px;top:284.80px;font-size:13px;line-height:13px;color:#333333;font-weight:normal;">Interaction:</div>
<div class="t" style="right:31px;top:284.80px;font-size:13px;line-height:13px;color:#1f78cf;font-weight:normal;text-align:right;">Press to open link</div>
<div class="t" style="left:1074px;top:338.20px;font-size:13px;line-height:13px;color:#333333;font-weight:normal;">Inventory:</div>
<div class="t" style="right:31px;top:338.20px;font-size:13px;line-height:13px;color:#1f78cf;font-weight:normal;text-align:right;">0</div>
<div class="t" style="left:1074px;top:358.20px;font-size:13px;line-height:13px;color:#333333;font-weight:normal;">Sold not posted:</div>
<div class="t" style="left:1074px;top:378.20px;font-size:13px;line-height:13px;color:#333333;font-weight:normal;">Reserved on Inventory:</div>
<div class="t" style="right:31px;top:378.20px;font-size:13px;line-height:13px;color:#1f78cf;font-weight:normal;text-align:right;">0</div>
<div class="t" style="left:1074px;top:398.20px;font-size:13px;line-height:13px;color:#333333;font-weight:normal;">Available Inventory:</div>
<div class="t" style="left:1074px;top:418.20px;font-size:13px;line-height:13px;color:#333333;font-weight:normal;">Inventory Total Qty.:</div>
<div class="t" style="right:31px;top:418.20px;font-size:13px;line-height:13px;color:#1f78cf;font-weight:normal;text-align:right;">0</div>
<div class="t" style="left:1074px;top:438.20px;font-size:13px;line-height:13px;color:#333333;font-weight:normal;">Total Qty. Sold not Posted:</div>
<div class="t" style="right:31px;top:438.20px;font-size:13px;line-height:13px;color:#1e1e1e;font-weight:normal;text-align:right;">0</div>
<div class="t" style="left:1074px;top:458.20px;font-size:13px;line-height:13px;color:#333333;font-weight:normal;">Total Qty. Reserved:</div>
<div class="t" style="right:31px;top:458.20px;font-size:13px;line-height:13px;color:#1f78cf;font-weight:normal;text-align:right;">0</div>
<div class="t" style="left:1074px;top:478.20px;font-size:13px;line-height:13px;color:#333333;font-weight:normal;">Available Total Qty.:</div>
<div class="t" style="right:31px;top:478.20px;font-size:13px;line-height:13px;color:#1e1e1e;font-weight:normal;text-align:right;">0</div>
<div class="t" style="left:1074px;top:531.20px;font-size:13px;line-height:13px;color:#333333;font-weight:normal;">Product ID:</div>
<div class="t" style="right:31px;top:531.20px;font-size:13px;line-height:13px;color:#1e1e1e;font-weight:normal;text-align:right;">PP029248</div>
<div class="t" style="left:1074px;top:551.20px;font-size:13px;line-height:13px;color:#333333;font-weight:normal;">Description:</div>
<div class="t" style="right:31px;top:551.20px;font-size:13px;line-height:13px;color:#1e1e1e;font-weight:normal;text-align:right;">Metacam</div>
<div class="t" style="left:1074px;top:571.20px;font-size:13px;line-height:13px;color:#333333;font-weight:normal;">Product Type:</div>
<div class="t" style="left:1074px;top:591.20px;font-size:13px;line-height:13px;color:#333333;font-weight:normal;">Is Drug:</div>
<div class="t" style="right:31px;top:591.20px;font-size:13px;line-height:13px;color:#1e1e1e;font-weight:normal;text-align:right;">Yes</div>
<div class="t" style="left:1074px;top:611.20px;font-size:13px;line-height:13px;color:#333333;font-weight:normal;">Requires Prescription:</div>
<div class="t" style="right:31px;top:611.20px;font-size:13px;line-height:13px;color:#1e1e1e;font-weight:normal;text-align:right;">Yes</div>
<div class="t" style="left:1074px;top:631.20px;font-size:13px;line-height:13px;color:#333333;font-weight:normal;">Exchangeable:</div>
<div class="t" style="right:31px;top:631.20px;font-size:13px;line-height:13px;color:#1e1e1e;font-weight:normal;text-align:right;">Not Specified</div>
<div class="t" style="left:1074px;top:651.20px;font-size:13px;line-height:13px;color:#333333;font-weight:normal;">ATC Code:</div>
<div class="t" style="right:31px;top:651.20px;font-size:13px;line-height:13px;color:#1e1e1e;font-weight:normal;text-align:right;">QM01AC06</div>
<div class="t" style="left:1074px;top:671.20px;font-size:13px;line-height:13px;color:#333333;font-weight:normal;">Control Group Code:</div>
<div class="t" style="right:31px;top:671.20px;font-size:13px;line-height:13px;color:#1e1e1e;font-weight:normal;text-align:right;">A</div>
<div class="t" style="left:1074px;top:691.20px;font-size:13px;line-height:13px;color:#333333;font-weight:normal;">Special Drug Code:</div>
<div class="t" style="left:1074px;top:711.20px;font-size:13px;line-height:13px;color:#333333;font-weight:normal;">Daily Dose:</div>
<div class="t" style="right:31px;top:711.20px;font-size:13px;line-height:13px;color:#1e1e1e;font-weight:normal;text-align:right;">0,00</div>
<div class="t" style="left:1074px;top:731.20px;font-size:13px;line-height:13px;color:#333333;font-weight:normal;">Daily Dose Unit Code:</div>
<div class="t" style="left:1074px;top:751.20px;font-size:13px;line-height:13px;color:#333333;font-weight:normal;">Form Code:</div>
<div class="t" style="right:31px;top:751.20px;font-size:13px;line-height:13px;color:#1e1e1e;font-weight:normal;text-align:right;">MIXTÚRA</div>
<div class="t" style="left:1074px;top:771.20px;font-size:13px;line-height:13px;color:#333333;font-weight:normal;">Form Group Code:</div>
<div class="t" style="left:1074px;top:791.20px;font-size:13px;line-height:13px;color:#333333;font-weight:normal;">Substance Group Code:</div>
<div class="a" style="left:1067px;top:802px;width:299px;height:31px;background:#fff;"></div>
<div class="a" style="left:1366px;top:194px;width:19px;height:608px;background:#fff;border-left:1px solid #e0e0e0;border-bottom:1px solid #d0d0d0;box-sizing:border-box;"></div>
<div class="a" style="left:1367px;top:213px;width:18px;height:471px;background:#dadada;"></div>
<div class="a" style="left:1367px;top:782px;width:18px;height:1px;background:#d8d8d8;"></div>
<svg class="a" style="left:1372px;top:201.5px;" width="8" height="5" viewBox="0 0 8 5"><path d="M1 4 L4 1 L7 4" fill="none" stroke="#555" stroke-width="1"/></svg>
<svg class="a" style="left:1372px;top:789.5px;" width="8" height="5" viewBox="0 0 8 5"><path d="M1 1 L4 4 L7 1" fill="none" stroke="#555" stroke-width="1"/></svg>
<div class="a" style="left:1373px;top:446px;width:5px;height:1px;background:#707070;"></div>
<div class="a" style="left:1373px;top:448px;width:5px;height:4px;background:#6a6a6a;"></div>
<div class="a" style="left:1384px;top:213px;width:1px;height:471px;background:#c8c8c8;"></div>
<div class="a" style="left:1298px;top:806px;width:83px;height:22px;background:#dddddd;border:1px solid #a8a8a8;border-radius:2px;box-sizing:border-box;"></div>
<div class="t" style="left:1138.5px;width:400px;top:811.50px;font-size:13px;line-height:13px;color:#111;font-weight:normal;text-align:center;">OK</div>
</body></html>
